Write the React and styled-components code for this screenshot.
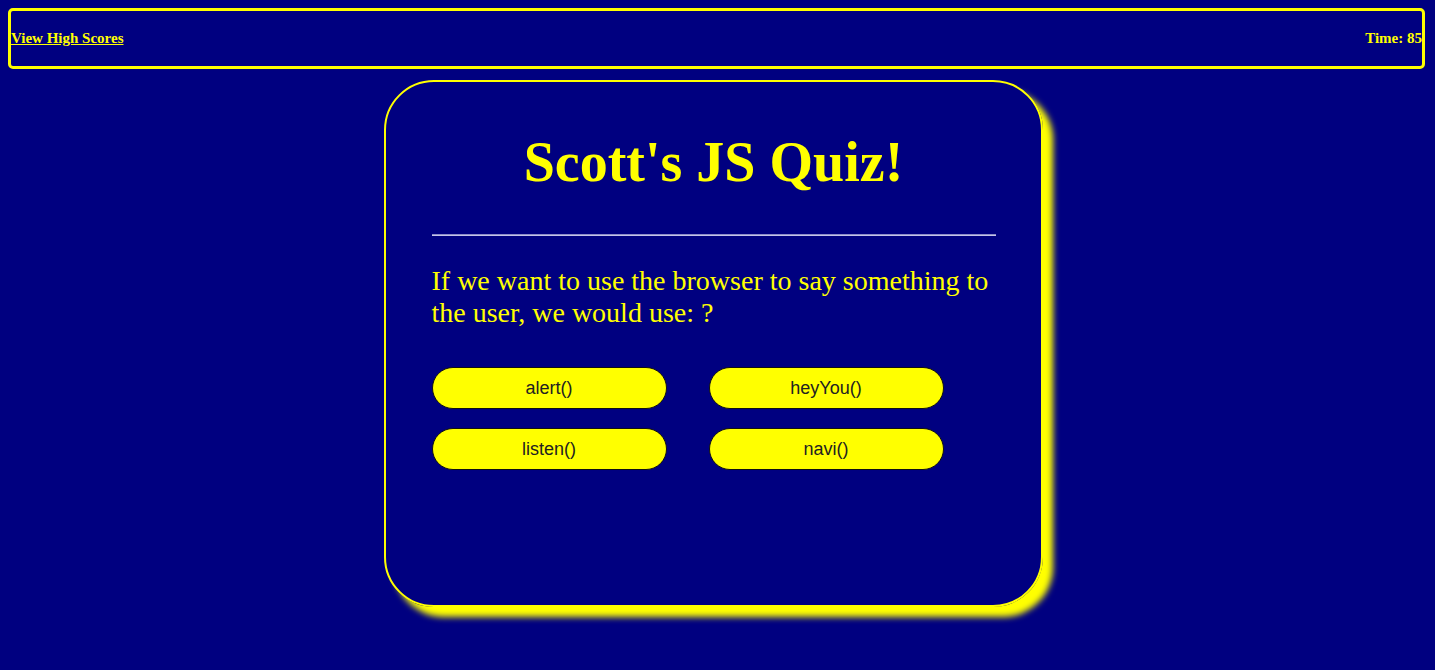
import React from "react";
import styled, { createGlobalStyle } from "styled-components";

const GlobalStyle = createGlobalStyle`
  html, body {
    margin: 0;
    padding: 0;
  }
  html {
    background: #000080;
  }
  body {
    margin: 8px;
    min-height: 654px;
    background: #000080;
    color: #ffff00;
    font-family: "Liberation Serif", "Times New Roman", serif;
  }
`;

const TopBar = styled.header`
  box-sizing: border-box;
  height: 61px;
  width: calc(100% - 2px);
  border: 3px solid #ffff00;
  border-radius: 5px;
  display: flex;
  justify-content: space-between;
  align-items: center;
  font-size: 15px;
  font-weight: bold;
  line-height: 17px;
`;

const ScoresLink = styled.a`
  color: #ffff00;
  text-decoration: underline;
  cursor: pointer;
`;

const Timer = styled.span`
  color: #ffff00;
`;

const Card = styled.main`
  box-sizing: border-box;
  width: 659px;
  height: 527px;
  margin: 11px 0 24px calc(50% - 334px);
  border: 2px solid #ffff00;
  border-radius: 50px;
  box-shadow: 10px 10px 6px #ffff00;
  padding: 48px 45px 0 46px;
  display: flex;
  flex-direction: column;
`;

const Title = styled.h1`
  margin: 0;
  font-size: 56px;
  font-weight: bold;
  text-align: center;
  line-height: 64px;
  color: #ffff00;
`;

const Rule = styled.hr`
  margin: 40px 0 0;
  height: 0;
  border: none;
  border-top: 1px solid #8c8cc8;
  border-bottom: 1px solid #c4c4e8;
`;

const Question = styled.p`
  margin: 29px 0 0;
  font-size: 28px;
  line-height: 32px;
  color: #ffff00;
`;

const Choices = styled.div`
  margin-top: 38px;
  display: grid;
  grid-template-columns: 235px 235px;
  column-gap: 42px;
  row-gap: 19px;
`;

const Choice = styled.button`
  box-sizing: border-box;
  height: 42px;
  background: #ffff00;
  border: 1px solid #111;
  border-radius: 21px;
  color: #222;
  font-family: "Liberation Sans", Arial, sans-serif;
  font-size: 18px;
  cursor: pointer;
  padding: 0;
`;

const answers = ["alert()", "heyYou()", "listen()", "navi()"];

export default function App() {
  return (
    <>
      <GlobalStyle />
      <TopBar>
        <ScoresLink>View High Scores</ScoresLink>
        <Timer>Time: 85</Timer>
      </TopBar>
      <Card>
        <Title>Scott's JS Quiz!</Title>
        <Rule />
        <Question>
          If we want to use the browser to say something to the user, we would use: ?
        </Question>
        <Choices>
          {answers.map((a) => (
            <Choice key={a}>{a}</Choice>
          ))}
        </Choices>
      </Card>
    </>
  );
}
